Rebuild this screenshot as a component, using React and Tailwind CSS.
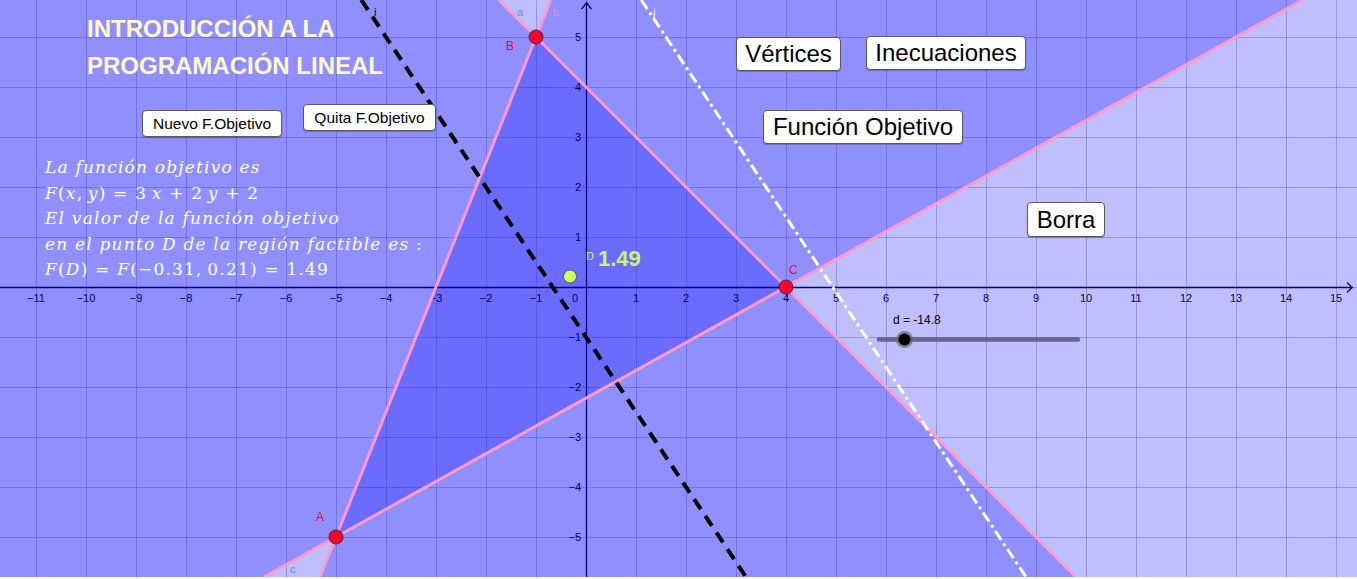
import React from "react";

// pixel mapping: 1 unit = 50px, origin at (586, 287)
const W = 1357;
const H = 577;
const X0 = 586;
const Y0 = 287;

const Btn = ({ className, children }) => (
  <div
    className={`absolute flex items-center justify-center bg-white border border-[#5a5a5a] rounded-[4px] text-black font-['Liberation_Sans',Arial,sans-serif] leading-none shadow-[0_1px_1px_rgba(0,0,0,0.25)] ${className}`}
  >
    {children}
  </div>
);

const I = ({ children }) => <span className="italic">{children}</span>;

const Graph = () => {
  const vLines = [];
  for (let px = X0 - 50 * 11; px <= W; px += 50) vLines.push(px);
  const hLines = [];
  for (let py = Y0 - 250; py <= H; py += 50) hLines.push(py);

  const xLabels = [];
  for (let k = -11; k <= 15; k++) if (k !== 0) xLabels.push(k);
  const yLabels = [5, 4, 3, 2, 1, -1, -2, -3, -4, -5];

  return (
    <svg className="absolute inset-0" width={W} height={H} viewBox={`0 0 ${W} ${H}`}>
      <rect width={W} height={H} fill="#ffffff" />
      {/* half planes */}
      <g fill="#0000ff" fillOpacity="0.25">
        <polygon points="0,0 499,0 1076,577 0,577" />
        <polygon points="550.8,0 1357,0 1357,577 320,577" />
        <polygon points="0,0 1302.6,0 264,577 0,577" />
      </g>
      {/* grid */}
      <g stroke="#333399" strokeOpacity="0.3" strokeWidth="1">
        {vLines.map((x) => (
          <line key={"v" + x} x1={x + 0.5} y1="0" x2={x + 0.5} y2={H} />
        ))}
        {hLines.map((y) => (
          <line key={"h" + y} x1="0" y1={y + 0.5} x2={W} y2={y + 0.5} />
        ))}
      </g>
      {/* axes */}
      <g stroke="#000080" strokeWidth="1.3" fill="none">
        <line x1="0" y1={Y0 + 0.5} x2={W - 4} y2={Y0 + 0.5} />
        <polyline points={`${W - 10},${Y0 - 4.5} ${W - 5},${Y0 + 0.5} ${W - 10},${Y0 + 5.5}`} />
        <line x1={X0 + 0.5} y1="2" x2={X0 + 0.5} y2={H} />
        <polyline points={`${X0 - 4.5},9 ${X0 + 0.5},3 ${X0 + 5.5},9`} />
      </g>
      <g fill="#000066" fontSize="11" fontFamily="'Liberation Sans', Arial, sans-serif">
        {xLabels.map((k) => (
          <text key={"x" + k} x={X0 + 50 * k} y={Y0 + 15} textAnchor="middle">
            {k < 0 ? "\u2212" + -k : k}
          </text>
        ))}
        <text x={X0 - 11} y={Y0 + 15} textAnchor="middle">0</text>
        {yLabels.map((k) => (
          <text key={"y" + k} x={X0 - 5} y={Y0 - 50 * k + 4} textAnchor="end">
            {k < 0 ? "\u2212" + -k : k}
          </text>
        ))}
      </g>
      {/* constraint lines */}
      <g stroke="#ff99cc" strokeWidth="3">
        <line x1="499" y1="0" x2="1076" y2="577" />
        <line x1="550.8" y1="0" x2="320" y2="577" />
        <line x1="264" y1="577" x2="1302.6" y2="0" />
      </g>
      {/* objective lines */}
      <line x1="361.3" y1="0" x2="746" y2="577" stroke="#000" strokeWidth="4" strokeDasharray="12 8" />
      <line x1="641.3" y1="0" x2="1026" y2="577" stroke="#fff" strokeWidth="3" strokeDasharray="11 4 3 4" />
      {/* line labels */}
      <g fontSize="11" fontFamily="'Liberation Sans', Arial, sans-serif">
        <text x="517" y="16" fill="#7d7de0">a</text>
        <text x="553" y="16" fill="#c89ae8">b</text>
        <text x="290" y="573" fill="#7d7de0">c</text>
        <text x="374" y="16" fill="#000">i</text>
        <text x="653" y="16" fill="#fff">j</text>
      </g>
      {/* points */}
      <g fill="#ff0033" stroke="#333" strokeWidth="1">
        <circle cx="336" cy="537" r="7" />
        <circle cx="536" cy="37" r="7" />
        <circle cx="786" cy="287" r="7" />
      </g>
      <circle cx="570" cy="276.5" r="6.5" fill="#ccff66" stroke="#555" strokeWidth="1" />
      <g fill="#ff0033" fontSize="12" fontFamily="'Liberation Sans', Arial, sans-serif">
        <text x="316" y="521">A</text>
        <text x="506" y="50">B</text>
        <text x="789" y="274">C</text>
      </g>
      <text x="586" y="260" fill="#ccf566" fontSize="11" fontFamily="'Liberation Sans', Arial, sans-serif">D</text>
      <text x="598" y="266" fill="#ccf566" fontSize="22" fontWeight="bold" fontFamily="'Liberation Sans', Arial, sans-serif">1.49</text>
      {/* slider */}
      <line x1="879" y1="339.5" x2="1078" y2="339.5" stroke="#55557a" strokeOpacity="0.85" strokeWidth="4.5" strokeLinecap="round" />
      <circle cx="904.5" cy="339.5" r="8.5" fill="#666" fillOpacity="0.7" />
      <circle cx="904.5" cy="339.5" r="6" fill="#000" />
      <text x="893" y="324" fill="#000" fontSize="12" fontFamily="'Liberation Sans', Arial, sans-serif">d = -14.8</text>
    </svg>
  );
};

export default function App() {
  return (
    <div className="bg-white w-[1357px] h-[579px]">
      <div className="relative w-[1357px] h-[577px] overflow-hidden">
        <Graph />

        <div className="absolute left-[87px] top-[10px] text-[24px] leading-[37px] font-bold text-[#fff8c8] font-['Liberation_Sans',Arial,sans-serif]">
          <div>INTRODUCCIÓN A LA</div>
          <div>PROGRAMACIÓN LINEAL</div>
        </div>

        <Btn className="left-[142px] top-[110px] w-[140px] h-[27px] text-[15.5px]">Nuevo F.Objetivo</Btn>
        <Btn className="left-[303px] top-[104px] w-[133px] h-[27px] text-[15.5px]">Quita F.Objetivo</Btn>
        <Btn className="left-[736px] top-[37px] w-[105px] h-[34px] text-[24px]">Vértices</Btn>
        <Btn className="left-[866px] top-[36px] w-[160px] h-[34px] text-[24px]">Inecuaciones</Btn>
        <Btn className="left-[763px] top-[110px] w-[200px] h-[34px] text-[24px]">Función Objetivo</Btn>
        <Btn className="left-[1027px] top-[202px] w-[78px] h-[35px] text-[24px]">Borra</Btn>

        <div className="absolute left-[45px] top-[155px] text-white text-[17px] leading-[25.6px] tracking-[1.2px] font-['DejaVu_Serif','Liberation_Serif',serif]">
          <div><I>La función objetivo es</I></div>
          <div><I>F</I>(<I>x</I>,&thinsp;<I>y</I>) = 3&thinsp;<I>x</I> + 2&thinsp;<I>y</I> + 2</div>
          <div><I>El valor de la función objetivo</I></div>
          <div><I>en el punto D de la región factible es</I> :</div>
          <div><I>F</I>(<I>D</I>) = <I>F</I>(−0.31,&thinsp;0.21) = 1.49</div>
        </div>
      </div>
    </div>
  );
}
